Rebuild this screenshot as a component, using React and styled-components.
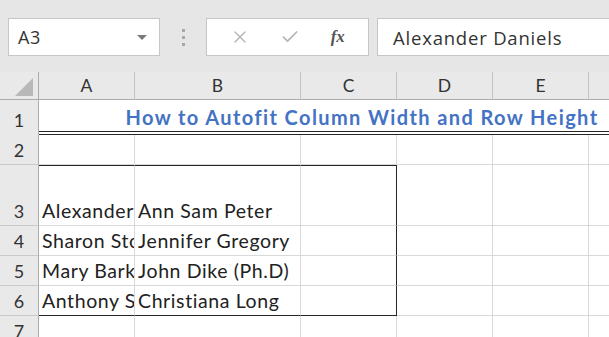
import React from 'react'
import styled, { createGlobalStyle } from 'styled-components'
import { X, Check } from 'lucide-react'

const GlobalStyle = createGlobalStyle`
body {
  margin: 0;
  background: #ffffff;
  font-family: Lato, "Liberation Sans", sans-serif;
}
`

const Page = styled.div`
width: 609px;
height: 337px;
overflow: hidden;
background: #ffffff;
`

const Toolbar = styled.div`
height: 72px;
background: #e6e6e6;
display: flex;
align-items: flex-start;
padding: 18px 0 0 8px;
box-sizing: border-box;
`

const NameBox = styled.div`
width: 152px;
height: 38px;
box-sizing: border-box;
background: #fff;
border: 1px solid #c6c6c6;
display: flex;
align-items: center;
justify-content: space-between;
padding: 0 12px 0 9px;
font-family: "Open Sans", "Noto Sans", sans-serif;
font-size: 18px;
letter-spacing: 0.6px;
color: #333;
`

const Caret = styled.span`
width: 0;
height: 0;
border-left: 5px solid transparent;
border-right: 5px solid transparent;
border-top: 5px solid #7a7a7a;
`

const Grip = styled.div`
width: 46px;
height: 38px;
display: flex;
flex-direction: column;
align-items: center;
justify-content: center;
gap: 4px;
span {
  width: 3px;
  height: 3px;
  background: #a8a8a8;
}
`

const ButtonBox = styled.div`
width: 163px;
height: 38px;
box-sizing: border-box;
background: #fff;
border: 1px solid #c6c6c6;
display: flex;
align-items: center;
justify-content: space-around;
padding: 0 8px;
color: #b4b4b4;
`

const Fx = styled.span`
font-family: "Liberation Serif", serif;
font-style: italic;
font-weight: bold;
font-size: 17px;
color: #555;
`

const FormulaInput = styled.div`
flex: 1;
margin-left: 8px;
height: 38px;
box-sizing: border-box;
background: #fff;
border: 1px solid #c6c6c6;
border-right: none;
display: flex;
align-items: center;
padding-left: 15px;
font-family: "Open Sans", "Noto Sans", sans-serif;
font-size: 18.5px;
letter-spacing: 0.8px;
color: #333;
white-space: nowrap;
`

const Sheet = styled.div`
display: grid;
grid-template-columns: 39px 96px 166px 96px 96px 96px 96px;
grid-template-rows: 28px 35px 30px 61px 30px 30px 30px 30px;
`

const Corner = styled.div`
background: #e9e9e9;
border-right: 1px solid #ababab;
border-bottom: 1px solid #ababab;
position: relative;
&::after {
  content: '';
  position: absolute;
  left: 15px;
  top: 6px;
  width: 18px;
  height: 18px;
  background: #b8b8b8;
  clip-path: polygon(100% 0, 100% 100%, 0 100%);
}
`

const ColHead = styled.div`
background: #e9e9e9;
border-right: 1px solid #c4c4c4;
border-bottom: 1px solid #ababab;
display: flex;
align-items: center;
justify-content: center;
font-size: 17.5px;
color: #333;
`

const RowHead = styled.div`
background: #e9e9e9;
border-right: 1px solid #ababab;
border-bottom: 1px solid ${p => (p.$double ? '#e9e9e9' : '#c9c9c9')};
display: flex;
align-items: flex-end;
justify-content: center;
padding-bottom: 5px;
box-sizing: border-box;
font-size: 18px;
line-height: 1;
color: #333;
`

const Title = styled.div`
grid-column: 2 / -1;
border-bottom: 4px double #262626;
display: flex;
align-items: flex-end;
justify-content: center;
padding: 0 0 4px 0;
box-sizing: border-box;
font-weight: 700;
font-size: 20px;
line-height: 1;
letter-spacing: 1.4px;
color: #4472c4;
white-space: nowrap;
`

const Cell = styled.div`
border-right: 1px solid ${p => (p.$boxRight ? '#262626' : '#d9d9d9')};
border-bottom: 1px solid ${p => (p.$boxBottom ? '#262626' : '#d9d9d9')};
border-top: ${p => (p.$boxTop ? '1px solid #262626' : 'none')};
box-sizing: border-box;
display: flex;
align-items: flex-end;
padding: 0 3px 5px;
overflow: hidden;
white-space: nowrap;
font-size: 19.5px;
line-height: 1;
letter-spacing: 0.6px;
color: #222;
`

const cols = ['A', 'B', 'C', 'D', 'E', 'F']

const people = [
  ['Alexander Daniels', 'Ann Sam Peter'],
  ['Sharon Stone', 'Jennifer Gregory'],
  ['Mary Barker', 'John Dike (Ph.D)'],
  ['Anthony Smith', 'Christiana Long'],
]

export default function App() {
  return (
    <Page>
      <GlobalStyle />
      <Toolbar>
        <NameBox>
          A3
          <Caret />
        </NameBox>
        <Grip>
          <span />
          <span />
          <span />
        </Grip>
        <ButtonBox>
          <X size={20} strokeWidth={1.6} />
          <Check size={20} strokeWidth={2} />
          <Fx>fx</Fx>
        </ButtonBox>
        <FormulaInput>Alexander Daniels</FormulaInput>
      </Toolbar>
      <Sheet>
        <Corner />
        {cols.map(c => (
          <ColHead key={c}>{c}</ColHead>
        ))}

        <RowHead $double>1</RowHead>
        <Title>How to Autofit Column Width and Row Height</Title>

        <RowHead>2</RowHead>
        {cols.map(c => (
          <Cell key={c} />
        ))}

        {people.map((row, i) => {
          const first = i === 0
          const last = i === people.length - 1
          return (
            <React.Fragment key={i}>
              <RowHead>{i + 3}</RowHead>
              <Cell $boxTop={first} $boxBottom={last}>{row[0]}</Cell>
              <Cell $boxTop={first} $boxBottom={last}>{row[1]}</Cell>
              <Cell $boxTop={first} $boxBottom={last} $boxRight />
              <Cell />
              <Cell />
              <Cell />
            </React.Fragment>
          )
        })}

        <RowHead>7</RowHead>
        {cols.map(c => (
          <Cell key={c} />
        ))}
      </Sheet>
    </Page>
  )
}
